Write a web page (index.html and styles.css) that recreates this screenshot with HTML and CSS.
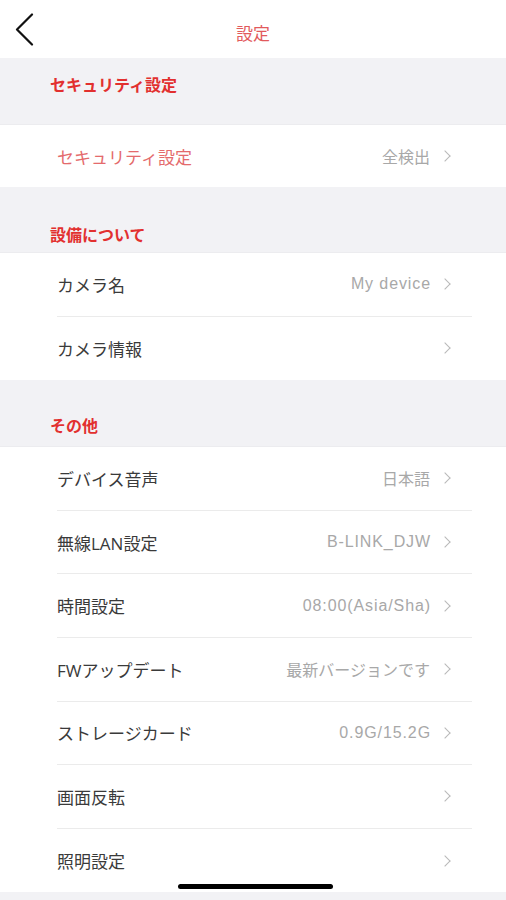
FILE: index.html
```html
<!DOCTYPE html>
<html lang="ja">
<head>
<meta charset="utf-8">
<link rel="stylesheet" href="styles.css">
</head>
<body>
<div class="page">
  <header class="topbar">
    <div class="back">
      <svg width="22" height="34" viewBox="0 0 22 34"><path d="M18 1.5 L3 16.5 L18 31.5" fill="none" stroke="#111" stroke-width="2.2" stroke-linecap="round" stroke-linejoin="round"/></svg>
    </div>
    <div class="title">設定</div>
    <div></div>
  </header>

  <div class="sec sec1">セキュリティ設定</div>
  <div class="group">
    <div class="row r63"><div class="inner"><span class="label red">セキュリティ設定</span><span class="value">全検出</span><span class="chev"></span></div></div>
  </div>

  <div class="sec sec2">設備について</div>
  <div class="group">
    <div class="row"><div class="inner line"><span class="label">カメラ名</span><span class="value lat">My device</span><span class="chev"></span></div></div>
    <div class="row"><div class="inner"><span class="label">カメラ情報</span><span class="value"></span><span class="chev"></span></div></div>
  </div>

  <div class="sec sec3">その他</div>
  <div class="group">
    <div class="row"><div class="inner line"><span class="label">デバイス音声</span><span class="value">日本語</span><span class="chev"></span></div></div>
    <div class="row"><div class="inner line"><span class="label">無線LAN設定</span><span class="value lat">B-LINK_DJW</span><span class="chev"></span></div></div>
    <div class="row"><div class="inner line"><span class="label">時間設定</span><span class="value lat">08:00(Asia/Sha)</span><span class="chev"></span></div></div>
    <div class="row"><div class="inner line"><span class="label">FWアップデート</span><span class="value">最新バージョンです</span><span class="chev"></span></div></div>
    <div class="row"><div class="inner line"><span class="label">ストレージカード</span><span class="value lat">0.9G/15.2G</span><span class="chev"></span></div></div>
    <div class="row"><div class="inner line"><span class="label">画面反転</span><span class="value"></span><span class="chev"></span></div></div>
    <div class="row"><div class="inner"><span class="label">照明設定</span><span class="value"></span><span class="chev"></span></div></div>
  </div>
  <div class="bottom"></div>
  <div class="home"></div>
</div>
</body>
</html>
```

FILE: styles.css
```css
* { box-sizing: border-box; margin: 0; padding: 0; }
html, body { background: #f2f2f5; }
body {
  width: 506px;
  height: 900px;
  overflow: hidden;
  font-family: "Open Sans", "Noto Sans CJK JP", sans-serif;
}
.page { position: relative; width: 506px; height: 900px; }
.topbar {
  height: 58px;
  background: #fff;
  display: grid;
  grid-template-columns: 80px 1fr 80px;
  align-items: center;
}
.back { padding-left: 14px; padding-top: 2px; display: flex; align-items: center; }
.title {
  text-align: center;
  color: #e25a5c;
  font-size: 17px;
  line-height: 24px;
  padding-top: 10px;
}
.sec {
  color: #e2302f;
  font-size: 16px;
  font-weight: bold;
  line-height: 20px;
  padding-left: 50px;
  background: #f2f2f5;
}
.sec1 { height: 66px; padding-top: 17px; }
.sec2 { height: 65px; padding-top: 38px; }
.sec3 { height: 66px; padding-top: 36px; }
.group { background: #fff; border-top: 1px solid #ececef; }
.row { height: 63.6px; padding-left: 57px; padding-right: 34px; }
.row.r63 { height: 62px; }
.inner {
  height: 100%;
  display: flex;
  align-items: center;
  padding-right: 20px;
}
.inner.line { border-bottom: 1px solid #ebebeb; }
.label { color: #3a3a3a; font-size: 17px; flex: 1; }
.label.red { color: #e46a6c; }
.value { color: #a8a8a8; font-size: 16px; margin-right: 11px; }
.value.lat {
  font-family: "Liberation Sans", "Noto Sans CJK JP", sans-serif;
  letter-spacing: 0.9px;
  margin-right: 10px;
}
.chev {
  width: 8px; height: 8px;
  border-right: 1.6px solid #b8b8b8;
  border-top: 1.6px solid #b8b8b8;
  transform: rotate(45deg);
  margin-right: 3px;
}
.bottom { height: 9px; background: #f2f2f5; }
.home {
  position: absolute;
  left: 178px; top: 884px;
  width: 155px; height: 5px;
  border-radius: 3px;
  background: #000;
}
```
